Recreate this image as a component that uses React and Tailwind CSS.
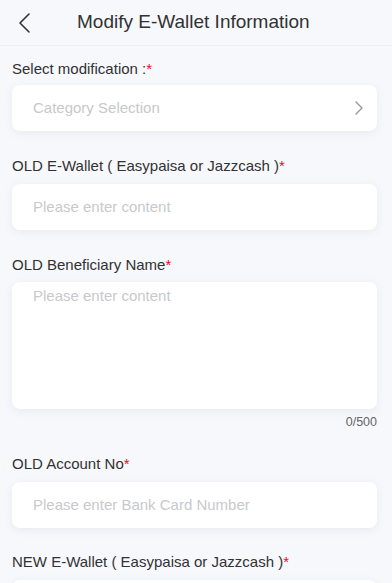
import React from 'react';

function Label({ text }) {
  return (
    <div className="h-5 leading-5 text-[15px] text-[#323233]">
      {text}
      <span className="text-[#ee0a24]">*</span>
    </div>
  );
}

function InputCard({ placeholder }) {
  return (
    <div className="mt-[8px] h-[46px] bg-white rounded-lg shadow-[0_2px_8px_rgba(100,110,140,0.10)] flex items-center px-[21px]">
      <span className="text-[15px] text-[#c8c9cc]">{placeholder}</span>
    </div>
  );
}

export default function App() {
  return (
    <div className="w-[392px] h-[583px] overflow-hidden bg-[#f7f8fc]" style={{ fontFamily: '"Liberation Sans", Arial, sans-serif' }}>
      {/* Header */}
      <div className="h-[46px] border-b border-[#eceef3] flex items-center relative">
        <svg className="absolute left-[16px] top-[12px]" width="18" height="22" viewBox="0 0 18 22" fill="none">
          <polyline points="13,2 4,11 13,20" stroke="#333" strokeWidth="1.6" strokeLinecap="round" strokeLinejoin="round" />
        </svg>
        <div className="ml-[77px] text-[19px] text-[#323233]">Modify E-Wallet Information</div>
      </div>

      <div className="pl-3 pr-[15px]">
        {/* Select */}
        <div className="pt-[13px]">
          <div className="h-5 leading-5 text-[15px] text-[#323233]">
            Select modification :<span className="text-[#ee0a24]">*</span>
          </div>
          <div className="mt-[6px] h-[46px] bg-white rounded-lg shadow-[0_2px_8px_rgba(100,110,140,0.10)] flex items-center justify-between pl-[21px] pr-[13px]">
            <span className="text-[15px] text-[#c8c9cc]">Category Selection</span>
            <svg width="10" height="16" viewBox="0 0 10 16" fill="none">
              <polyline points="2,2 8,8 2,14" stroke="#969799" strokeWidth="1.4" strokeLinecap="round" strokeLinejoin="round" />
            </svg>
          </div>
        </div>

        <div className="pt-[25px]">
          <Label text="OLD E-Wallet ( Easypaisa or Jazzcash )" />
          <InputCard placeholder="Please enter content" />
        </div>

        {/* Textarea */}
        <div className="pt-[25px]">
          <Label text="OLD Beneficiary Name" />
          <div className="mt-[7px] h-[127px] bg-white rounded-lg shadow-[0_2px_8px_rgba(100,110,140,0.10)] px-[21px] pt-[2px]">
            <span className="text-[15px] text-[#c8c9cc]">Please enter content</span>
          </div>
          <div className="mt-[5px] h-4 leading-4 text-right text-[12.5px] text-[#646566]">0/500</div>
        </div>

        <div className="pt-[24px]">
          <Label text="OLD Account No" />
          <InputCard placeholder="Please enter Bank Card Number" />
        </div>

        <div className="pt-[24px]">
          <Label text="NEW E-Wallet ( Easypaisa or Jazzcash )" />
          <InputCard placeholder="Please enter content" />
        </div>
      </div>
    </div>
  );
}
